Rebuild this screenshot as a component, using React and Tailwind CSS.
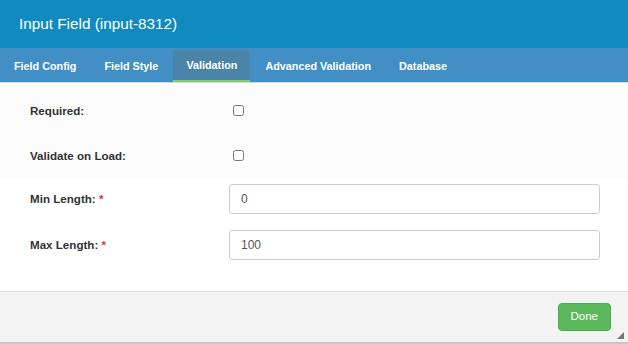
export default function App() {
  const tabs = ['Field Config', 'Field Style', 'Validation', 'Advanced Validation', 'Database']

  return (
    <div className="w-[628px] h-[344px] flex flex-col bg-white overflow-hidden" style={{ fontFamily: '"Liberation Sans", Arial, sans-serif' }}>
      <div className="h-[48px] shrink-0 bg-[#118abf] flex items-center pl-[19px]">
        <h1 className="text-[15.3px] text-white">Input Field (input-8312)</h1>
      </div>

      <div className="h-[35px] shrink-0 bg-[#428fc5] flex items-end border-b border-[#d8d8d8]">
        {tabs.map((t) => (
          <div
            key={t}
            className={
              t === 'Validation'
                ? 'h-[32px] px-[13px] mx-[1px] flex items-center text-[10.8px] font-bold text-white bg-[#4a84a8] rounded-t-[3px] border-b-2 border-[#7ed06f]'
                : 'h-[32px] px-[14px] flex items-center text-[10.8px] font-bold text-white'
            }
          >
            {t}
          </div>
        ))}
      </div>

      <div className="flex-1 flex flex-col">
        <div className="bg-[#fcfcfc] pt-[5px]">
          <div className="h-[45px] flex items-center">
            <label className="w-[229px] pl-[30px] text-[11.6px] font-bold text-[#333]">Required:</label>
            <input type="checkbox" className="ml-[4px] w-[11px] h-[11px]" />
          </div>
          <div className="h-[45px] flex items-center">
            <label className="w-[229px] pl-[30px] text-[11.6px] font-bold text-[#333]">Validate on Load:</label>
            <input type="checkbox" className="ml-[4px] w-[11px] h-[11px]" />
          </div>
        </div>

        <div className="flex flex-col gap-[16px] pt-[6px]">
          <div className="flex items-center">
            <label className="w-[229px] pl-[30px] text-[11.6px] font-bold text-[#333]">
              Min Length: <span className="text-[#e0303a]">*</span>
            </label>
            <input defaultValue="0" className="w-[371px] h-[30px] px-[11px] text-[12px] text-[#555] border border-[#ccc] rounded-[3px] bg-white" />
          </div>
          <div className="flex items-center">
            <label className="w-[229px] pl-[30px] text-[11.6px] font-bold text-[#333]">
              Max Length: <span className="text-[#e0303a]">*</span>
            </label>
            <input defaultValue="100" className="w-[371px] h-[30px] px-[11px] text-[12px] text-[#555] border border-[#ccc] rounded-[3px] bg-white" />
          </div>
        </div>
      </div>

      <div className="relative h-[53px] shrink-0 bg-[#f3f3f3] border-t border-[#ddd] border-b-2 border-b-[#c8c8c8] flex items-center justify-end pr-[17px]">
        <button className="h-[28px] px-[12px] text-[11.5px] text-white bg-[#5cb85c] border border-[#4cae4c] rounded-[4px]">Done</button>
        <svg className="absolute right-[4px] bottom-[3px]" width="7" height="7" viewBox="0 0 7 7">
          <polygon points="7,0 7,7 0,7" fill="#777" />
        </svg>
      </div>
    </div>
  )
}
